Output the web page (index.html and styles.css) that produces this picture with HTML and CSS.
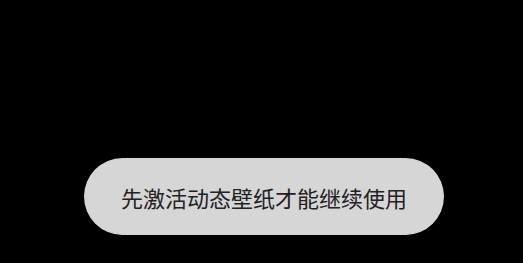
FILE: index.html
```html
<!DOCTYPE html>
<html lang="zh-CN">
<head>
<meta charset="utf-8">
<link rel="stylesheet" href="styles.css">
</head>
<body>
<div class="screen">
  <div class="toast">先激活动态壁纸才能继续使用</div>
</div>
</body>
</html>
```
FILE: styles.css
```css
html, body {
  margin: 0;
  padding: 0;
  background: #000;
}
.screen {
  width: 523px;
  height: 263px;
  box-sizing: border-box;
  padding: 158px 0 0 84px;
  display: flex;
  align-items: flex-start;
}
.toast {
  width: 360px;
  height: 77px;
  box-sizing: border-box;
  border-radius: 38.5px;
  background: #d6d6d6;
  color: #222;
  font-family: "Noto Sans CJK SC", "Noto Sans", sans-serif;
  font-size: 22px;
  display: flex;
  align-items: center;
  justify-content: center;
  white-space: nowrap;
}
```
